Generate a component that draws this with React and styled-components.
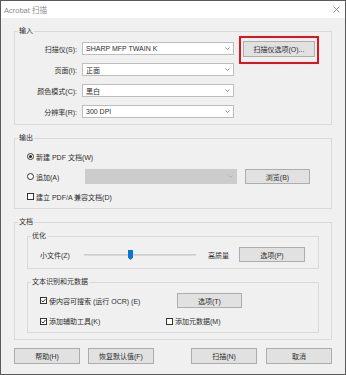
import React from "react";
import styled, { createGlobalStyle, css } from "styled-components";

const Global = createGlobalStyle`
  html, body { margin: 0; padding: 0; background: #f0f0f0; }
  body { font-family: "Liberation Sans", "Noto Sans CJK SC", sans-serif; font-size: 7px; color: #2e2e2e; }
  * { box-sizing: border-box; }
`;

const Window = styled.div`
  width: 346px;
  height: 375px;
  border: 1px solid #5a5a5a;
  background: #f0f0f0;
  display: flex;
  flex-direction: column;
`;

const TitleBar = styled.div`
  height: 17px;
  background: #ffffff;
  display: flex;
  align-items: center;
  justify-content: space-between;
  padding: 0 5px 0 3px;
  color: #8c8c8c;
  font-size: 7.5px;
`;

const Content = styled.div`
  padding: 8px 13px 0;
  display: flex;
  flex-direction: column;
`;

const Group = styled.fieldset`
  margin: ${(p) => (p.$first ? "0" : "8px 0 0")};
  padding: 0;
  border: 1px solid #d9d9d9;
  min-width: 0;
`;

const Legend = styled.legend`
  margin-left: 3px;
  padding: 0 1px;
  line-height: 10px;
  height: 10px;
  font-size: 7px;
`;

const GroupBody = styled.div`
  display: flex;
  flex-direction: column;
  gap: ${(p) => p.$gap || 0}px;
  padding: ${(p) => p.$pad};
`;

const Row = styled.div`
  display: flex;
  align-items: center;
  height: ${(p) => p.$h || 13}px;
`;

const FieldLabel = styled.span`
  width: 62px;
  text-align: right;
  margin-right: 5px;
  white-space: nowrap;
`;

const Combo = styled.div`
  width: 152px;
  height: ${(p) => p.$h || 13}px;
  border: 1px solid ${(p) => (p.$disabled ? "#cccccc" : "#bdbdbd")};
  background: ${(p) => (p.$disabled ? "#cccccc" : "#ffffff")};
  display: flex;
  align-items: center;
  justify-content: space-between;
  padding: 0 3px 0 3px;
  margin-left: ${(p) => p.$ml || 0}px;
  white-space: nowrap;
`;

const Chevron = ({ color = "#707070" }) => (
  <svg width="5" height="3" viewBox="0 0 5 3">
    <polyline points="0.5,0.5 2.5,2.5 4.5,0.5" fill="none" stroke={color} strokeWidth="0.8" />
  </svg>
);

const Button = styled.button`
  font: inherit;
  color: inherit;
  width: ${(p) => p.$w || 66}px;
  height: ${(p) => p.$h || 15}px;
  margin-left: ${(p) => p.$ml || 0}px;
  padding: 0;
  background: #e1e1e1;
  border: 1px solid #adadad;
  display: flex;
  align-items: center;
  justify-content: center;
  white-space: nowrap;
  ${(p) =>
    p.$highlight &&
    css`
      position: relative;
      &::after {
        content: "";
        position: absolute;
        left: -5px;
        right: -5px;
        top: -6px;
        bottom: -8px;
        border: 2px solid #e0121b;
      }
    `}
`;

const Item = styled.label`
  display: flex;
  align-items: center;
  width: ${(p) => (p.$w ? `${p.$w}px` : "auto")};
  white-space: nowrap;
  gap: 2px;
`;

const RadioMark = styled.span`
  width: 7px;
  height: 7px;
  border: 1px solid #333;
  border-radius: 50%;
  background: #fff;
  display: flex;
  align-items: center;
  justify-content: center;
  &::after {
    content: "";
    width: 3px;
    height: 3px;
    border-radius: 50%;
    background: ${(p) => (p.$on ? "#222" : "transparent")};
  }
`;

const CheckBox = styled.span`
  width: 7px;
  height: 7px;
  border: 1px solid #333;
  background: #fff;
  display: flex;
  align-items: center;
  justify-content: center;
`;

const Check = ({ on }) => (
  <CheckBox>
    {on && (
      <svg width="5" height="5" viewBox="0 0 5 5">
        <polyline points="0.5,2.5 2,4 4.5,1" fill="none" stroke="#222" strokeWidth="0.9" />
      </svg>
    )}
  </CheckBox>
);

const SliderLabel = styled.span`
  width: 44px;
  white-space: nowrap;
`;

const Track = styled.div`
  position: relative;
  width: 112px;
  height: 2px;
  background: #d8d8d8;
  border-top: 1px solid #cfcfcf;
`;

const Thumb = styled.svg`
  position: absolute;
  left: 44px;
  top: -5px;
`;

const Text = styled.span`
  margin-left: ${(p) => p.$ml || 0}px;
  white-space: nowrap;
`;

const Footer = styled.div`
  margin-top: 8px;
  display: flex;
  justify-content: space-between;
`;

const ButtonGroup = styled.div`
  display: flex;
  gap: ${(p) => p.$gap}px;
`;

export default function App() {
  return (
    <>
      <Global />
      <Window>
        <TitleBar>
          <span>Acrobat 扫描</span>
          <svg width="7" height="7" viewBox="0 0 7 7">
            <path d="M0.5 0.5L6.5 6.5M6.5 0.5L0.5 6.5" stroke="#777" strokeWidth="0.8" />
          </svg>
        </TitleBar>
        <Content>
          <Group $first>
            <Legend>输入</Legend>
            <GroupBody $gap={8} $pad="6px 0 6px 0">
              <Row>
                <FieldLabel>扫描仪(S):</FieldLabel>
                <Combo>
                  <span>SHARP MFP TWAIN K</span>
                  <Chevron />
                </Combo>
                <Button $w={72} $h={16} $ml={9} $highlight>
                  扫描仪选项(O)...
                </Button>
              </Row>
              <Row>
                <FieldLabel>页面(I):</FieldLabel>
                <Combo>
                  <span>正面</span>
                  <Chevron />
                </Combo>
              </Row>
              <Row>
                <FieldLabel>颜色模式(C):</FieldLabel>
                <Combo>
                  <span>黑白</span>
                  <Chevron />
                </Combo>
              </Row>
              <Row>
                <FieldLabel>分辨率(R):</FieldLabel>
                <Combo>
                  <span>300 DPI</span>
                  <Chevron />
                </Combo>
              </Row>
            </GroupBody>
          </Group>

          <Group>
            <Legend>输出</Legend>
            <GroupBody $gap={5} $pad="6px 0 4px 12px">
              <Row $h={15}>
                <Item>
                  <RadioMark $on />
                  新建 PDF 文档(W)
                </Item>
              </Row>
              <Row $h={15}>
                <Item $w={58}>
                  <RadioMark />
                  追加(A)
                </Item>
                <Combo $disabled $h={15}>
                  <span />
                  <Chevron color="#a8a8a8" />
                </Combo>
                <Button $w={65} $h={15} $ml={8}>
                  浏览(B)
                </Button>
              </Row>
              <Row $h={15}>
                <Item>
                  <Check />
                  建立 PDF/A 兼容文档(D)
                </Item>
              </Row>
            </GroupBody>
          </Group>

          <Group>
            <Legend>文档</Legend>
            <GroupBody $pad="4px 12px 6px 12px">
              <Group $first>
                <Legend>优化</Legend>
                <GroupBody $pad="6px 0 6px 12px">
                  <Row $h={15}>
                    <SliderLabel>小文件(Z)</SliderLabel>
                    <Track>
                      <Thumb width="5" height="10" viewBox="0 0 5 10">
                        <path d="M0 0H5V7.5L2.5 10L0 7.5Z" fill="#0a74d6" />
                      </Thumb>
                    </Track>
                    <Text $ml={12}>高质量</Text>
                    <Button $w={66} $h={15} $ml={10}>
                      选项(P)
                    </Button>
                  </Row>
                </GroupBody>
              </Group>
              <Group>
                <Legend>文本识别和元数据</Legend>
                <GroupBody $gap={6} $pad="6px 0 4px 12px">
                  <Row $h={15}>
                    <Item $w={137}>
                      <Check on />
                      使内容可搜索 (运行 OCR) (E)
                    </Item>
                    <Button $w={65} $h={15}>
                      选项(T)
                    </Button>
                  </Row>
                  <Row $h={14}>
                    <Item $w={126}>
                      <Check on />
                      添加辅助工具(K)
                    </Item>
                    <Item>
                      <Check />
                      添加元数据(M)
                    </Item>
                  </Row>
                </GroupBody>
              </Group>
            </GroupBody>
          </Group>

          <Footer>
            <ButtonGroup $gap={8}>
              <Button $h={16}>帮助(H)</Button>
              <Button $h={16}>恢复默认值(F)</Button>
            </ButtonGroup>
            <ButtonGroup $gap={9}>
              <Button $h={16}>扫描(N)</Button>
              <Button $h={16}>取消</Button>
            </ButtonGroup>
          </Footer>
        </Content>
      </Window>
    </>
  );
}
